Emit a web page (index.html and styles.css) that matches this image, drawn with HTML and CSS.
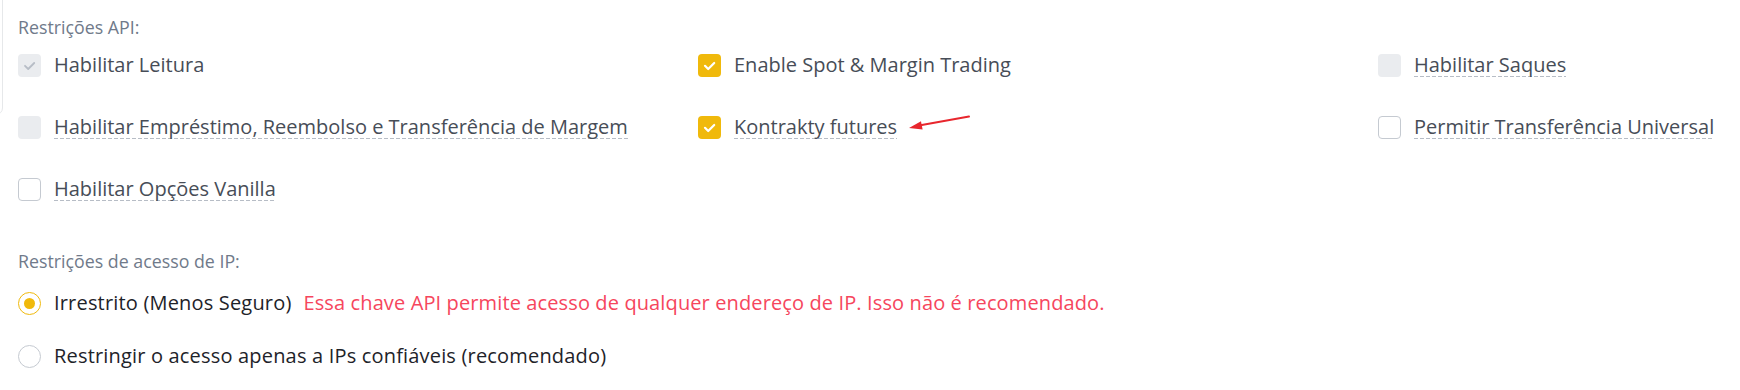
FILE: index.html
```html
<!DOCTYPE html>
<html lang="pt">
<head>
<meta charset="utf-8">
<title>Restrições API</title>
<link rel="stylesheet" href="styles.css">
</head>
<body>
<div class="page">
  <div class="edge"></div>
  <section class="group">
    <div class="group-label">Restrições API:</div>
    <div class="perm-grid">
      <label class="item">
        <span class="box box-disabled">
          <svg viewBox="0 0 23 23" width="23" height="23"><path d="M7 11.8l3.2 3.2 6-6" fill="none" stroke="#b7bdc6" stroke-width="1.8" stroke-linecap="round" stroke-linejoin="round"/></svg>
        </span>
        <span class="text">Habilitar Leitura</span>
      </label>
      <label class="item">
        <span class="box box-checked">
          <svg viewBox="0 0 23 23" width="23" height="23"><path d="M7 11.8l3.2 3.2 6-6" fill="none" stroke="#fff" stroke-width="2.2" stroke-linecap="round" stroke-linejoin="round"/></svg>
        </span>
        <span class="text">Enable Spot &amp; Margin Trading</span>
      </label>
      <label class="item">
        <span class="box box-disabled"></span>
        <span class="text dashed">Habilitar Saques</span>
      </label>

      <label class="item">
        <span class="box box-disabled"></span>
        <span class="text dashed">Habilitar Empréstimo, Reembolso e Transferência de Margem</span>
      </label>
      <label class="item item-annotated">
        <span class="box box-checked">
          <svg viewBox="0 0 23 23" width="23" height="23"><path d="M7 11.8l3.2 3.2 6-6" fill="none" stroke="#fff" stroke-width="2.2" stroke-linecap="round" stroke-linejoin="round"/></svg>
        </span>
        <span class="text dashed">Kontrakty futures</span>
        <svg class="arrow" viewBox="0 0 64 16" width="64" height="16"><path d="M11 10.6L61 1.6" stroke="#e8262d" stroke-width="2" stroke-linecap="round"/><path d="M1 13L13 6.2 14.6 14.6Z" fill="#e8262d"/></svg>
      </label>
      <label class="item">
        <span class="box box-empty"></span>
        <span class="text dashed">Permitir Transferência Universal</span>
      </label>

      <label class="item">
        <span class="box box-empty"></span>
        <span class="text dashed">Habilitar Opções Vanilla</span>
      </label>
    </div>
  </section>

  <section class="group group-ip">
    <div class="group-label">Restrições de acesso de IP:</div>
    <div class="radio-list">
      <label class="item">
        <span class="radio radio-on"></span>
        <span class="text strong">Irrestrito (Menos Seguro)</span>
        <span class="warn">Essa chave API permite acesso de qualquer endereço de IP. Isso não é recomendado.</span>
      </label>
      <label class="item">
        <span class="radio"></span>
        <span class="text strong">Restringir o acesso apenas a IPs confiáveis (recomendado)</span>
      </label>
    </div>
  </section>
</div>
</body>
</html>
```

FILE: styles.css
```css
* { box-sizing: border-box; }

html, body {
  margin: 0;
  padding: 0;
  background: #ffffff;
  overflow: hidden;
}

body {
  font-family: "Open Sans", "Noto Sans", sans-serif;
  color: #474d57;
}

.page {
  position: relative;
  width: 1740px;
  height: 390px;
  padding: 17px 0 0 18px;
}

.edge {
  position: absolute;
  left: -20px;
  top: -20px;
  width: 23px;
  height: 135px;
  border: 1px solid #e6e8ea;
  border-radius: 7px;
}

.group-label {
  font-size: 17.8px;
  line-height: 20px;
  color: #707a8a;
}

.perm-grid {
  margin-top: 16px;
  display: grid;
  grid-template-columns: 680px 680px 1fr;
  row-gap: 38px;
}

.item {
  display: flex;
  align-items: center;
  height: 24px;
  white-space: nowrap;
}

.item-annotated {
  position: relative;
}

.box {
  flex: none;
  width: 23px;
  height: 23px;
  border-radius: 4px;
  margin-right: 13px;
  display: flex;
  align-items: center;
  justify-content: center;
}

.box svg { display: block; }

.box-disabled { background: #eaecef; }

.box-checked { background: #f0b90b; }

.box-empty {
  background: #fff;
  border: 1.5px solid #c5cad1;
}

.text {
  font-size: 20px;
  line-height: 24px;
  color: #474d57;
}

.text.strong {
  color: #1e2329;
  letter-spacing: 0.18px;
}

.dashed {
  background-image: repeating-linear-gradient(to right, #b7bdc6 0 4px, transparent 4px 6px);
  background-size: 100% 1px;
  background-repeat: no-repeat;
  background-position: left bottom;
}

.arrow {
  position: absolute;
  left: 210px;
  top: 0;
}

.group-ip {
  margin-top: 50px;
}

.radio-list {
  margin-top: 20px;
  display: flex;
  flex-direction: column;
  gap: 29px;
}

.radio {
  flex: none;
  width: 23px;
  height: 23px;
  border-radius: 50%;
  border: 1.5px solid #c5cad1;
  margin-right: 13px;
  display: flex;
  align-items: center;
  justify-content: center;
}

.radio-on { border-color: #f0b90b; }

.radio-on::after {
  content: "";
  width: 11px;
  height: 11px;
  border-radius: 50%;
  background: #f0b90b;
}

.warn {
  margin-left: 12px;
  font-size: 20px;
  line-height: 24px;
  letter-spacing: 0.12px;
  color: #f6465d;
}
```
